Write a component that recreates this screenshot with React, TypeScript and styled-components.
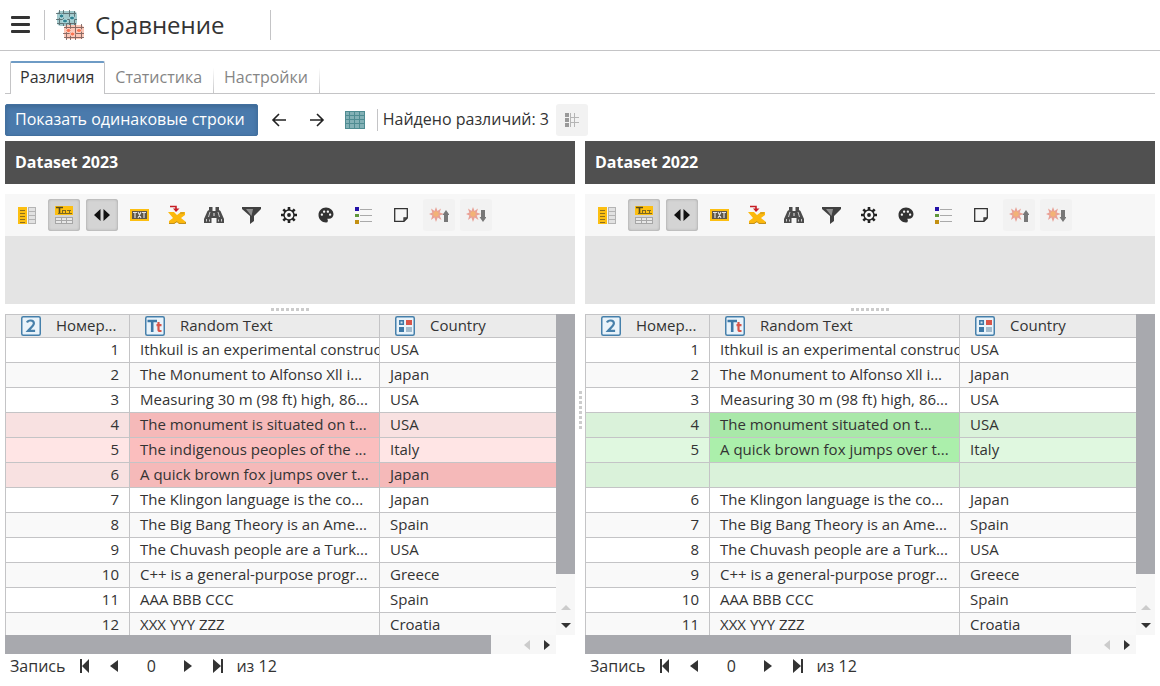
import React from "react";
import styled, { createGlobalStyle, css } from "styled-components";
import { MdPalette } from "react-icons/md";

type Tone = "red" | "green";
type Mark = "light" | "strong";

const line = "#c4c4c6";
const ink = "#333";

const tones = {
  red: { light: ["#ffe5e5", "#f8e1e1"], strong: ["#fbbebe", "#f5b9b9"] },
  green: { light: ["#e0f8e0", "#daf2da"], strong: ["#abefab", "#a9e8a9"] },
};

const GlobalStyle = createGlobalStyle`
  *, *::before, *::after { box-sizing: border-box; }
  body { margin: 0; background: #fff; color: ${ink}; font: 15px/24px "Open Sans", "Noto Sans", sans-serif; }
  button, input { font: inherit; color: inherit; }
`;

const Page = styled.div`
  display: flex;
  flex-direction: column;
  height: 100vh;
  min-height: 480px;
`;

const Header = styled.header`
  display: flex;
  align-items: center;
  flex: none;
  height: 51px;
  padding: 0 4px;
  border-bottom: 1px solid ${line};
`;

const PlainButton = styled.button`
  display: flex;
  align-items: center;
  justify-content: center;
  padding: 0;
  border: 0;
  background: none;
  cursor: pointer;
`;

const MenuButton = styled(PlainButton)`
  width: 32px;
  height: 32px;
  margin-right: 8px;
`;

const Divider = styled.span<{ $height: number }>`
  flex: none;
  width: 1px;
  height: ${(p) => p.$height}px;
  background: ${line};
`;

const Title = styled.h1`
  margin: 0 45px 0 10px;
  font-size: 24px;
  line-height: 32px;
  font-weight: 400;
`;

const Logo = styled.svg`
  flex: none;
  margin-left: 11px;
`;

const Tabs = styled.div`
  display: flex;
  flex: none;
  height: 33px;
  margin: 10px 5px 0;
  padding-left: 5px;
  box-shadow: inset 0 -1px ${line};
`;

const Tab = styled.button<{ $active?: boolean }>`
  padding: 0 12px 2px 10px;
  border: 0;
  background: linear-gradient(transparent 20%, ${line}) right / 1px 100% no-repeat;
  font-size: 16px;
  line-height: 24px;
  color: #858585;
  cursor: pointer;
  ${(p) =>
    p.$active &&
    css`
      padding: 0 10px 3px 9px;
      border: 1px solid ${line};
      border-top: 2px solid #6e9bc5;
      border-bottom: 0;
      border-radius: 2px 2px 0 0;
      background: #fff;
      color: ${ink};
    `}
`;

const ActionBar = styled.div`
  display: flex;
  align-items: center;
  flex: none;
  gap: 5px;
  padding: 10px 5px 5px;
  font-size: 16px;
`;

const PrimaryButton = styled.button`
  height: 32px;
  padding: 0 12px 2px 9px;
  border: 1px solid #42709f;
  border-radius: 2px;
  background: #4a7aac;
  box-shadow: inset 0 2px 4px #3d6893;
  color: #fff;
  line-height: 24px;
  cursor: pointer;
`;

const FoundText = styled.span`
  padding: 0 2px 2px 0;
`;

const IconButton = styled(PlainButton)<{ $pressed?: boolean; $muted?: boolean }>`
  width: 32px;
  height: 32px;
  border-radius: 3px;
  ${(p) =>
    p.$pressed &&
    css`
      background: #d4d4d4;
      box-shadow: inset 0 0 3px #999;
    `}
  ${(p) =>
    p.$muted &&
    css`
      background: #f2f2f2;
    `}
`;

const NavButton = styled(PlainButton)`
  width: 33px;
  height: 32px;
`;

const Compare = styled.main`
  display: grid;
  grid-template-columns: minmax(0, 1fr) 10px minmax(0, 1fr);
  flex: 1;
  min-height: 0;
  padding: 0 5px 8px;
`;

const Panel = styled.section`
  display: flex;
  flex-direction: column;
  min-height: 0;
`;

const PanelTitle = styled.h2`
  flex: none;
  margin: 0 0 10px;
  padding: 9px 10px 10px;
  background: #505050;
  color: #fff;
  font-size: 16px;
  line-height: 24px;
  font-weight: 700;
`;

const Tools = styled.div`
  flex: none;
  padding: 5px 3px;
  background: #f7f7f7;
`;

const ToolGrid = styled.div`
  display: grid;
  grid-template-columns: repeat(13, 1fr);
  justify-items: center;
  width: 487px;
  max-width: 100%;
`;

const GroupArea = styled.div`
  flex: none;
  height: 68px;
  background: #e4e4e4;
`;

const Splitter = styled.div<{ $vertical?: boolean }>`
  display: flex;
  flex: none;
  align-items: center;
  justify-content: center;
  ${(p) => (p.$vertical ? "flex-direction: column;" : "height: 10px;")}
  &::before {
    content: "";
    width: ${(p) => (p.$vertical ? 3 : 38)}px;
    height: ${(p) => (p.$vertical ? 38 : 3)}px;
    background: repeating-linear-gradient(${(p) => (p.$vertical ? "180deg" : "90deg")}, #ccc 0 3px, transparent 3px 5px);
  }
`;

const Sheet = styled.div`
  display: grid;
  grid-template-columns: minmax(0, 1fr) 19px;
  grid-template-rows: minmax(0, 1fr) 19px;
  flex: 1;
  min-height: 0;
`;

const Viewport = styled.div`
  overflow: hidden;
`;

const Table = styled.table`
  width: 100%;
  table-layout: fixed;
  border-collapse: separate;
  border-spacing: 0;
`;

const HeadCell = styled.th`
  height: 24px;
  padding: 0;
  border: solid ${line};
  border-width: 1px 1px 1px 0;
  background: #ebebeb;
  font-weight: 400;
  line-height: 20px;
  text-align: left;
  &:first-child { border-left-width: 1px; }
  &:last-child { border-right-width: 0; }
`;

const HeadContent = styled.span`
  display: flex;
  align-items: center;
  gap: 15px;
  padding-left: 15px;
`;

const HeadText = styled.span`
  padding-bottom: 2px;
`;

const Cell = styled.td<{ $bg: string }>`
  height: 25px;
  padding: 0 0 2px 10px;
  overflow: hidden;
  border: solid ${line};
  border-width: 0 1px 1px 0;
  background: ${(p) => p.$bg};
  line-height: 22px;
  white-space: nowrap;
  &:first-child { border-left-width: 1px; padding-right: 10px; text-align: right; }
  &:last-child { border-right-width: 0; }
`;

const ScrollBar = styled.div<{ $vertical?: boolean }>`
  display: flex;
  flex-direction: ${(p) => (p.$vertical ? "column" : "row")};
  background: #f7f7f7;
`;

const Thumb = styled.div`
  flex: 1;
  background: #a8a9ae;
`;

const ScrollArrows = styled.div<{ $vertical?: boolean }>`
  display: flex;
  align-items: center;
  justify-content: flex-end;
  ${(p) => (p.$vertical ? "flex-direction: column; height: 61px; padding-bottom: 1px;" : "width: 65px; padding-right: 1px;")}
`;

const ScrollButton = styled(PlainButton)`
  width: 18px;
  height: 18px;
`;

const Pager = styled.footer`
  display: flex;
  align-items: center;
  flex: none;
  height: 24px;
  padding-left: 5px;
  font-size: 16px;
`;

const PagerLabel = styled.label`
  margin-right: 4px;
`;

const PagerButton = styled(PlainButton)`
  width: 30px;
  height: 24px;
`;

const PagerInput = styled.input`
  width: 44px;
  height: 24px;
  padding: 0;
  border: 0;
  background: none;
  text-align: center;
`;

const PagerTotal = styled.span`
  margin-left: 3px;
`;

const MenuIcon = () => (
  <svg width="20" height="20" viewBox="0 0 20 20" fill={ink}>
    <rect x="1" y="1" width="19" height="3" rx="1" />
    <rect x="1" y="8" width="19" height="3" rx="1" />
    <rect x="1" y="15" width="19" height="3" rx="1" />
  </svg>
);

const LogoIcon = () => (
  <Logo width="29" height="30" viewBox="0 0 29 30" aria-hidden="true">
    <rect x="1" y="1" width="20" height="15" rx="4" fill="#a3c9cc" />
    <path d="M3.500 0v15M7.500 0v16M13.500 0v16M18.500 1v14M0 3.500h20M0 9.500h21M1 13.500h19" stroke="#47595c" opacity=".75" />
    <g fill="#2f8190" stroke="#b9e3e6" strokeWidth="1">
      <ellipse cx="5.500" cy="6" rx="2.500" ry="2" />
      <ellipse cx="16" cy="8" rx="2.500" ry="2" />
      <ellipse cx="9" cy="11" rx="2.500" ry="2" />
    </g>
    <rect x="8" y="15" width="20" height="14" rx="4" fill="#fcc6b6" />
    <path d="M10.500 14v16M14.500 13v17M19.500 13v17M25.500 14v15M8 17.500h20M7 23.500h21M8 27.500h20" stroke="#654c49" opacity=".75" />
    <g fill="#fb7452" stroke="#ffd6ca" strokeWidth="1">
      <ellipse cx="12.500" cy="20.500" rx="2.500" ry="2" />
      <ellipse cx="23" cy="20.500" rx="2.500" ry="2" />
      <ellipse cx="16.500" cy="24" rx="2.500" ry="2" />
    </g>
  </Logo>
);

const ArrowIcon = ({ right }: { right?: boolean }) => (
  <svg width="16" height="16" viewBox="0 0 16 16" fill="none" stroke="#222" strokeWidth="1.6">
    <path d={right ? "M1 8h13M8 2l6 6-6 6" : "M15 8H2M8 2L2 8l6 6"} />
  </svg>
);

const GridIcon = () => (
  <svg width="20" height="18" viewBox="0 0 20 18">
    <path fill="#83b1b6" d="M0 0h20v18H0z" />
    <path d="M.5 0v18M4.500 0v18M9.500 0v18M14.500 0v18M19.500 0v18M0 .5h20M0 4.500h20M0 8.500h20M0 12.500h20M0 17.500h20" stroke="#4f8c92" />
  </svg>
);

const TreeGridIcon = () => (
  <svg width="14" height="14" viewBox="0 0 14 14">
    <path fill="#999" d="M0 0h4v4H0zM0 5h4v4H0zM0 10h4v4H0z" />
    <path d="M5 4.500h9M5 9.500h9M9.500 0v14M5.500 0v14" stroke="#b5b5b5" />
  </svg>
);

const ColumnsIcon = () => (
  <svg width="18" height="17" viewBox="0 0 18 17">
    <path fill="#fcbf12" d="M0 0h9v17H0z" />
    <path d="M2 3.500h5M2 6.500h5M2 9.500h5M2 12.500h5M2 15.500h5" stroke="#8d6f1d" />
    <path fill="#e2e2e2" d="M11 1h7v16h-7z" />
    <path d="M10.500 0v17M11 .5h7M11 4.500h7M11 8.500h7M11 12.500h7M11 16.500h7M17.500 0v17" stroke="#b4b4b4" />
  </svg>
);

const HeaderRowIcon = () => (
  <svg width="18" height="18" viewBox="0 0 18 18">
    <path fill="#fcbf12" d="M0 0h18v9H0z" />
    <path d="M1 1.500h7M4.500 1v6" stroke="#55491c" strokeWidth="1.600" />
    <path d="M7.500 4v3M10.500 4v3M14.500 4v3M7 4.500h4M12 4.500h4M3 7.500h14" stroke="#7b6820" />
    <path fill="#e7e7e7" d="M0 11h18v6H0z" />
    <path d="M0 11.500h18M0 14.500h18M0 17.500h18M.5 11v7M6.500 11v7M11.500 11v7M17.500 11v7" stroke="#a6a6a6" />
  </svg>
);

const FitIcon = () => (
  <svg width="16" height="12" viewBox="0 0 16 12">
    <path d="M6.500 0v12L0 6zM9.500 0v12L16 6z" fill="#111" />
  </svg>
);

const TxtIcon = () => (
  <svg width="19" height="12" viewBox="0 0 19 12">
    <path fill="#fcbf12" d="M0 0h19v12H0z" />
    <path fill="#5d5749" d="M2 2h15v8H2z" />
    <path d="M3 3.500h4M5 3v6M8 3l3 6M11 3L8 9M12 3.500h4M14 3v6" stroke="#e6e6e6" strokeWidth="1.1" />
  </svg>
);

const ExcelIcon = () => (
  <svg width="18" height="20" viewBox="0 0 18 20">
    <path d="M0 7h6l3 3 4-3h4v3l-4 3 5 4v2h-7l-2-2-3 2H1v-3l4-3z" fill="#fcb80d" />
    <path d="M1 18.500h5l3-2 2 2h6.500V17M12 8h4" fill="none" stroke="#c09022" />
    <path d="M2 1.500h6V5" fill="none" stroke="#c71d24" strokeWidth="1.600" />
    <path d="M5 3.500h6.500L8 7z" fill="#c71d24" />
  </svg>
);

const BinocularsIcon = () => (
  <svg width="20" height="18" viewBox="0 0 20 18">
    <path d="M5 1h3.500v4h3V1H15v3l1.500 1L20 13v4h-7.500v-5h-5v5H0v-4l3.500-8L5 4z" fill="#4c4c4c" />
    <path d="M6 6L4.500 11M14 6l1.500 5M2.500 13v2.500M5.500 13.500v2M14.500 13.500v2M17.500 13v2.500" stroke="#c9c9c9" />
    <path d="M9.500 7h1v3h-1z" fill="#eee" />
  </svg>
);

const FilterIcon = () => (
  <svg width="19" height="17" viewBox="0 0 19 17">
    <path d="M0 0h19v2l-7 7v5l-4 3V9L0 2z" fill="#414141" />
    <path d="M4 2h7L9.500 9z" fill="#8f8f8f" />
  </svg>
);

const GearIcon = () => (
  <svg width="16" height="16" viewBox="0 0 16 16" fill="none" stroke="#222">
    <circle cx="8" cy="8" r="5" strokeWidth="1.400" />
    <circle cx="8" cy="8" r="1.900" fill="#222" stroke="none" />
    <path d="M8 0v3M8 13v3M0 8h3M13 8h3M2.300 2.300l2 2M11.700 11.700l2 2M2.300 13.700l2-2M11.700 4.300l2-2" strokeWidth="2.600" />
  </svg>
);

const LegendIcon = () => (
  <svg width="17" height="17" viewBox="0 0 17 17">
    <path fill="#2412a8" d="M0 0h4v4H0z" />
    <path fill="#5f973a" d="M0 7h4v3H0z" />
    <path fill="#c39012" d="M0 13h4v4H0z" />
    <path d="M5 2.500h12M5 8.500h12M5 14.500h12" stroke="#aaa" />
  </svg>
);

const NoteIcon = () => (
  <svg width="14" height="14" viewBox="0 0 14 14" fill="none" stroke="#333" strokeWidth="1.300">
    <path d="M.7.7h12.600v9.300L10 13.300H.7zM13.300 10H10v3.300" />
  </svg>
);

const BurstIcon = ({ down }: { down?: boolean }) => (
  <svg width="20" height="16" viewBox="0 0 20 16">
    <path d="M7 0l1.500 4L12 1.500 10.700 5.500 15 7l-4.300 1.500L12.500 13 8.700 10.500 7 15l-1.600-4.500L2 13l1.300-4.500L0 7l3.300-1.500L2 1.500 5.500 4z" fill="#e9a196" />
    <circle cx="7" cy="7" r="2.700" fill="#f2b376" />
    <path d={down ? "M15 3h4v7h1.500L17 15l-3.500-5H15z" : "M15 15h4V8h1.500L17 3l-3.500 5H15z"} fill="#777" />
  </svg>
);

const TypeFrame = ({ children }: { children: React.ReactNode }) => (
  <svg width="20" height="20" viewBox="0 0 20 20" aria-hidden="true">
    <rect x=".75" y=".75" width="18.500" height="18.500" rx="1.500" fill="#e9f3fa" stroke="#4680ab" strokeWidth="1.500" />
    {children}
  </svg>
);

const IntegerIcon = () => (
  <TypeFrame>
    <path d="M6 6.500C7 3.800 12.800 3.600 12.900 7.300c0 2.700-4 5.200-6 7.600h7.200" fill="none" stroke="#4680ab" strokeWidth="2.200" />
  </TypeFrame>
);

const StringIcon = () => (
  <TypeFrame>
    <path d="M2.500 5h9.500M7.200 5v11" stroke="#3c78a6" strokeWidth="2.600" />
    <path d="M13.500 6v7.500q0 1.500 1.500 1.500h1.500M11.500 9.200h5" fill="none" stroke="#d95448" strokeWidth="2.200" />
  </TypeFrame>
);

const CategoryIcon = () => (
  <TypeFrame>
    <path fill="#d95448" d="M11 4h6v5h-6z" />
    <path fill="#3c78a6" d="M4 11h5v5H4z" />
    <path fill="#a3bbcd" d="M11 11h6v5h-6z" />
    <path d="M4.800 4.800h3.500v3.500H4.800z" fill="#cfe1ed" stroke="#3c78a6" strokeWidth="1.500" />
  </TypeFrame>
);

const trianglePaths = { up: "M0 8l5-5 5 5z", down: "M0 3l5 5 5-5z", left: "M7 0v10L1 5z", right: "M3 0v10l6-5z" };

const Triangle = ({ to, color = ink }: { to: keyof typeof trianglePaths; color?: string }) => (
  <svg width="10" height="10" viewBox="0 0 10 10">
    <path d={trianglePaths[to]} fill={color} />
  </svg>
);

const EdgeIcon = ({ last }: { last?: boolean }) => (
  <svg width="11" height="14" viewBox="0 0 11 14" fill={ink}>
    <path d={last ? "M0 0l8 7-8 7zM8 0h2v14H8z" : "M10 0L3 7l7 7zM1 0h2v14H1z"} />
  </svg>
);

const StepIcon = ({ next }: { next?: boolean }) => (
  <svg width="8" height="12" viewBox="0 0 8 12" fill={ink}>
    <path d={next ? "M0 0l8 6-8 6z" : "M8 0L0 6l8 6z"} />
  </svg>
);

interface Tool {
  label: string;
  icon: React.ReactNode;
  pressed?: boolean;
  muted?: boolean;
}

const tools: Tool[] = [
  { label: "Столбцы", icon: <ColumnsIcon /> },
  { label: "Заголовки", icon: <HeaderRowIcon />, pressed: true },
  { label: "Ширина столбцов", icon: <FitIcon />, pressed: true },
  { label: "Экспорт в TXT", icon: <TxtIcon /> },
  { label: "Экспорт в Excel", icon: <ExcelIcon /> },
  { label: "Поиск", icon: <BinocularsIcon /> },
  { label: "Фильтр", icon: <FilterIcon /> },
  { label: "Параметры", icon: <GearIcon /> },
  { label: "Палитра", icon: <MdPalette size={18} color="#333" /> },
  { label: "Легенда", icon: <LegendIcon /> },
  { label: "Заметка", icon: <NoteIcon /> },
  { label: "Предыдущее отличие", icon: <BurstIcon />, muted: true },
  { label: "Следующее отличие", icon: <BurstIcon down />, muted: true },
];

interface Row {
  cells: [string, string, string];
  marks?: [Mark, Mark, Mark];
}

const leftRows: Row[] = [
  { cells: ["1", "Ithkuil is an experimental construc", "USA"] },
  { cells: ["2", "The Monument to Alfonso Xll i...", "Japan"] },
  { cells: ["3", "Measuring 30 m (98 ft) high, 86...", "USA"] },
  { cells: ["4", "The monument is situated on t...", "USA"], marks: ["light", "strong", "light"] },
  { cells: ["5", "The indigenous peoples of the ...", "Italy"], marks: ["light", "strong", "light"] },
  { cells: ["6", "A quick brown fox jumps over t...", "Japan"], marks: ["light", "strong", "strong"] },
  { cells: ["7", "The Klingon language is the co...", "Japan"] },
  { cells: ["8", "The Big Bang Theory is an Ame...", "Spain"] },
  { cells: ["9", "The Chuvash people are a Turk...", "USA"] },
  { cells: ["10", "C++ is a general-purpose progr...", "Greece"] },
  { cells: ["11", "AAA BBB CCC", "Spain"] },
  { cells: ["12", "XXX YYY ZZZ", "Croatia"] },
];

const rightRows: Row[] = [
  ...leftRows.slice(0, 3),
  { cells: ["4", "The monument situated on t...", "USA"], marks: ["light", "strong", "light"] },
  { cells: ["5", "A quick brown fox jumps over t...", "Italy"], marks: ["light", "strong", "light"] },
  { cells: ["", "", ""], marks: ["light", "light", "light"] },
  ...leftRows.slice(6).map((row, i): Row => ({ cells: [String(i + 6), row.cells[1], row.cells[2]] })),
];

const columns = [
  { title: "Номер...", icon: <IntegerIcon /> },
  { title: "Random Text", icon: <StringIcon /> },
  { title: "Country", icon: <CategoryIcon /> },
];

const cellColor = (row: Row, rowIndex: number, cellIndex: number, tone: Tone) => {
  const parity = rowIndex % 2;
  if (row.marks) {
    return tones[tone][row.marks[cellIndex]][parity];
  }
  return parity ? "#f9f9f9" : "#fff";
};

const DatasetPanel = ({ title, rows, tone, id }: { title: string; rows: Row[]; tone: Tone; id: string }) => (
  <Panel>
    <PanelTitle>{title}</PanelTitle>
    <Tools>
      <ToolGrid>
        {tools.map((tool) => (
          <IconButton key={tool.label} type="button" aria-label={tool.label} $pressed={tool.pressed} $muted={tool.muted}>
            {tool.icon}
          </IconButton>
        ))}
      </ToolGrid>
    </Tools>
    <GroupArea />
    <Splitter />
    <Sheet>
      <Viewport>
        <Table>
          <colgroup>
            <col width="125" />
            <col width="250" />
            <col />
          </colgroup>
          <thead>
            <tr>
              {columns.map((column) => (
                <HeadCell key={column.title}>
                  <HeadContent>
                    {column.icon}
                    <HeadText>{column.title}</HeadText>
                  </HeadContent>
                </HeadCell>
              ))}
            </tr>
          </thead>
          <tbody>
            {rows.map((row, rowIndex) => (
              <tr key={rowIndex}>
                {row.cells.map((text, cellIndex) => (
                  <Cell key={cellIndex} $bg={cellColor(row, rowIndex, cellIndex, tone)}>
                    {text}
                  </Cell>
                ))}
              </tr>
            ))}
          </tbody>
        </Table>
      </Viewport>
      <ScrollBar $vertical>
        <Thumb />
        <ScrollArrows $vertical>
          <ScrollButton type="button" aria-label="Вверх">
            <Triangle to="up" color="#ccc" />
          </ScrollButton>
          <ScrollButton type="button" aria-label="Вниз">
            <Triangle to="down" />
          </ScrollButton>
        </ScrollArrows>
      </ScrollBar>
      <ScrollBar>
        <Thumb />
        <ScrollArrows>
          <ScrollButton type="button" aria-label="Влево">
            <Triangle to="left" color="#ccc" />
          </ScrollButton>
          <ScrollButton type="button" aria-label="Вправо">
            <Triangle to="right" />
          </ScrollButton>
        </ScrollArrows>
      </ScrollBar>
    </Sheet>
    <Pager>
      <PagerLabel htmlFor={id}>Запись</PagerLabel>
      <PagerButton type="button" aria-label="Первая запись">
        <EdgeIcon />
      </PagerButton>
      <PagerButton type="button" aria-label="Предыдущая запись">
        <StepIcon />
      </PagerButton>
      <PagerInput id={id} type="text" defaultValue="0" />
      <PagerButton type="button" aria-label="Следующая запись">
        <StepIcon next />
      </PagerButton>
      <PagerButton type="button" aria-label="Последняя запись">
        <EdgeIcon last />
      </PagerButton>
      <PagerTotal>из 12</PagerTotal>
    </Pager>
  </Panel>
);

export default function App() {
  return (
    <Page>
      <GlobalStyle />
      <Header>
        <MenuButton type="button" aria-label="Меню">
          <MenuIcon />
        </MenuButton>
        <Divider $height={30} />
        <LogoIcon />
        <Title>Сравнение</Title>
        <Divider $height={30} />
      </Header>
      <Tabs role="tablist">
        <Tab type="button" role="tab" aria-selected $active>
          Различия
        </Tab>
        <Tab type="button" role="tab" aria-selected={false}>
          Статистика
        </Tab>
        <Tab type="button" role="tab" aria-selected={false}>
          Настройки
        </Tab>
      </Tabs>
      <ActionBar>
        <PrimaryButton type="button">Показать одинаковые строки</PrimaryButton>
        <NavButton type="button" aria-label="Назад">
          <ArrowIcon />
        </NavButton>
        <NavButton type="button" aria-label="Вперёд">
          <ArrowIcon right />
        </NavButton>
        <NavButton type="button" aria-label="Таблица">
          <GridIcon />
        </NavButton>
        <Divider $height={22} />
        <FoundText>Найдено различий: 3</FoundText>
        <IconButton type="button" aria-label="Поля" $muted>
          <TreeGridIcon />
        </IconButton>
      </ActionBar>
      <Compare>
        <DatasetPanel id="record-2023" title="Dataset 2023" rows={leftRows} tone="red" />
        <Splitter $vertical />
        <DatasetPanel id="record-2022" title="Dataset 2022" rows={rightRows} tone="green" />
      </Compare>
    </Page>
  );
}
